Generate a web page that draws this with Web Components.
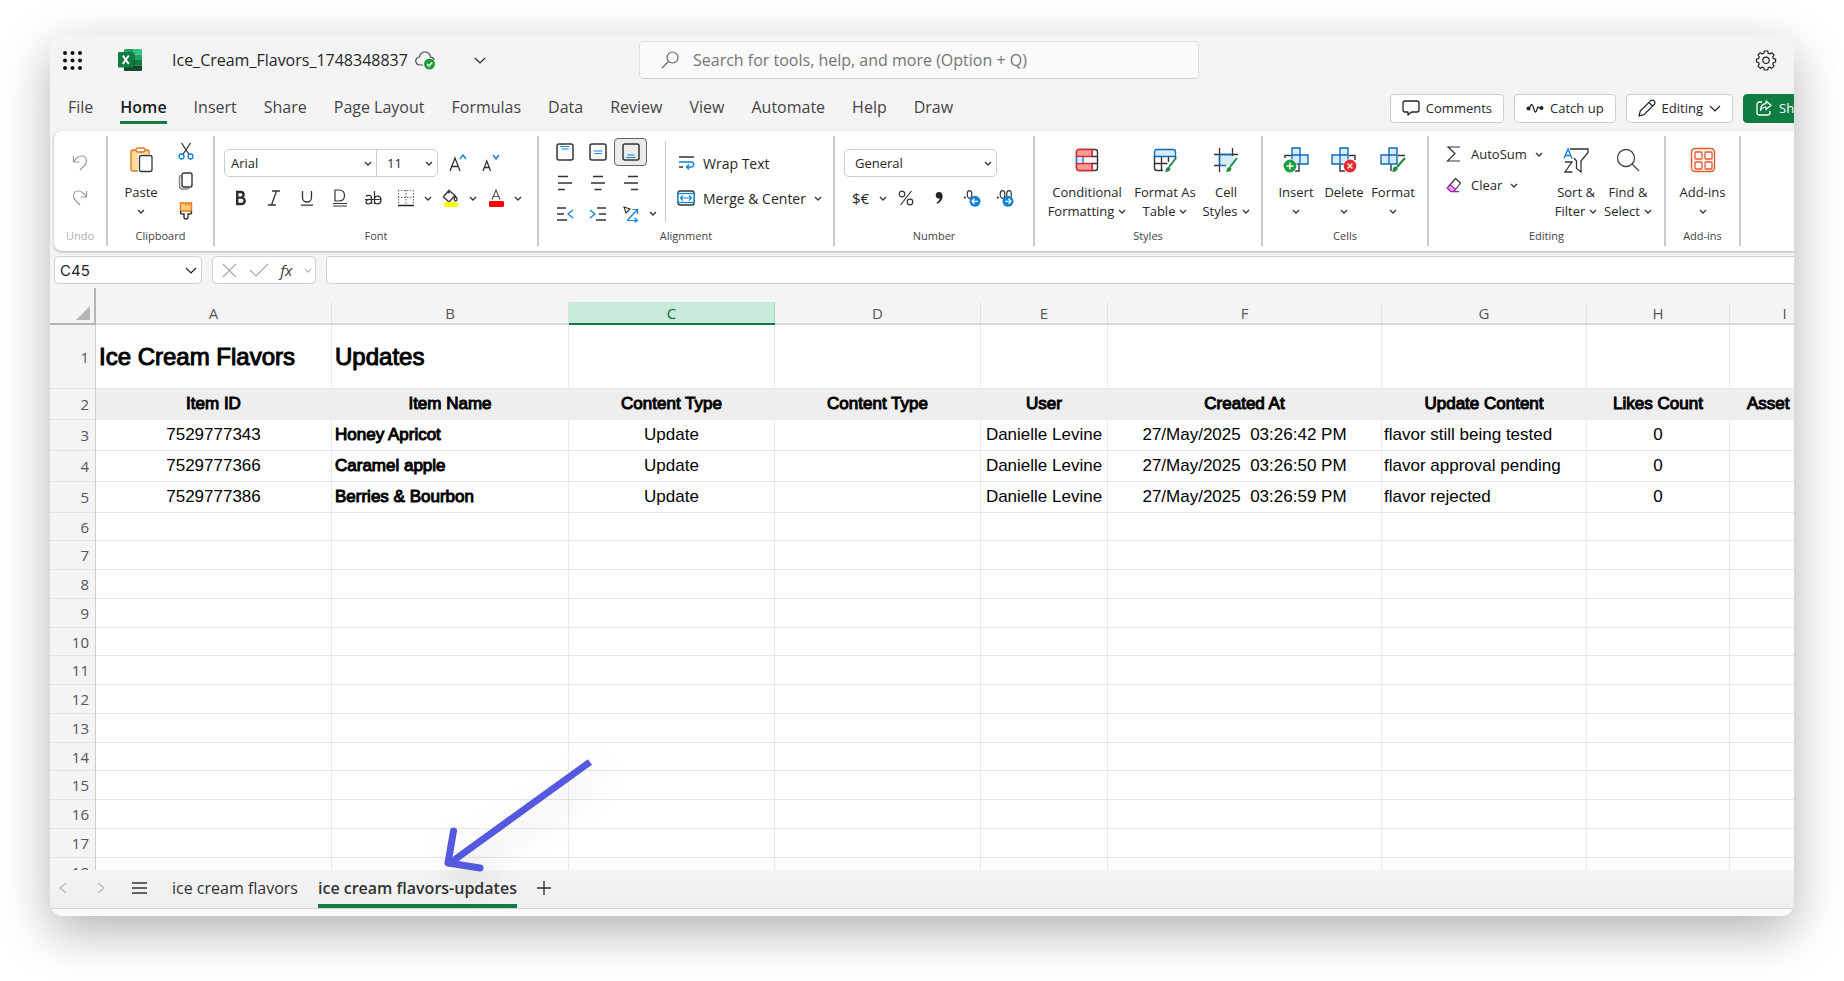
<!DOCTYPE html>
<html lang="en">
<head>
<meta charset="utf-8">
<title>Ice_Cream_Flavors_1748348837</title>
<style>
  body { margin: 0; background: #fff; font-family: "Open Sans", "Noto Sans", sans-serif; color: #262626; }
</style>
</head>
<body>
<workbook-window></workbook-window>

<script>
const define = (name, html, setup) => customElements.define(name, class extends HTMLElement {
  constructor() {
    super();
    const t = document.createElement('template');
    t.innerHTML = html;
    this.attachShadow({ mode: 'open' }).append(t.content.cloneNode(true));
  }
  connectedCallback() { if (setup) setup.call(this, this.shadowRoot); }
});

const D = '#333', B = '#0f83d6', G = '#1e8e3e', M = '#9a9a9a';
/* name: [width, height, markup] */
const ICONS = {
  chev: [8, 5, `<path d="M1 1l3 3 3-3" stroke="${D}" stroke-width="1.3"/>`],
  chevgrey: [8, 5, `<path d="M1 1l3 3 3-3" stroke="#bbb" stroke-width="1.3"/>`],
  chevbig: [12, 7, `<path d="M1 1l5 5 5-5" stroke="#222" stroke-width="1.2"/>`],
  waffle: [19, 19, [2, 9.5, 17].map(y => [2, 9.5, 17].map(x => `<circle cx="${x}" cy="${y}" r="2" fill="#111"/>`).join('')).join('')],
  excel: [24, 22, `<path d="M7.500 0H15v5.500H6V1.500Q6 0 7.500 0z" fill="#21a366"/><path d="M15 0h7.500Q24 0 24 1.500v4H15z" fill="#33c481"/><path d="M6 5.500h9V11H6z" fill="#107c41"/><path d="M15 5.500h9V11h-9z" fill="#21a366"/><path d="M6 11h9v5.500H6z" fill="#185c37"/><path d="M15 11h9v5.500h-9z" fill="#107c41"/><path d="M6 16.500h18v4Q24 22 22.500 22h-15Q6 22 6 20.500z" fill="#134a2c"/><rect x="6" y="4" width="11" height="15" fill="#0b3d22" opacity=".4"/><rect y="3" width="15.500" height="15.500" rx="1.300" fill="#107c41"/><path d="M4.800 6.500l6 8.500M10.800 6.500l-6 8.500" stroke="#fff" stroke-width="2"/>`],
  cloud: [21, 19, `<path d="M8 14H5a4 4 0 0 1-.5-8C5 3 7 1 10 1c3.200 0 5 2 5.500 5 2 .1 3.300 1.200 3.600 3" stroke="#444" stroke-width="1.200"/><circle cx="14.500" cy="13" r="5.500" fill="#1fa03c"/><path d="M12 13l2 2 3.200-3.500" stroke="#fff" stroke-width="1.400"/>`],
  search: [18, 18, `<circle cx="11.500" cy="6.500" r="5.500" stroke="#666" stroke-width="1.200"/><path d="M7.500 10.500L1 17" stroke="#666" stroke-width="1.200"/>`],
  gear: [20, 20, `<path d="M8.300 1h3.400l.5 2.300 1.500.7 2-1.300 2.300 2.300-1.300 2 .7 1.600 2.200.4v3l-2.200.5-.7 1.500 1.300 2.100-2.300 2.300-2-1.300-1.500.7-.5 2.200H8.300l-.5-2.200-1.500-.7-2 1.300L2 16.100l1.300-2.100-.7-1.500L.5 12V9l2.100-.4L3.300 7 2 5l2.300-2.300 2 1.300 1.500-.7z" stroke="#222" stroke-width="1.200" stroke-linejoin="round"/><circle cx="10" cy="10.300" r="3.200" stroke="#222" stroke-width="1.200"/>`],
  comment: [18, 16, `<path d="M3 1h12q2 0 2 2v7q0 2-2 2H9.500L6 15v-3H3q-2 0-2-2V3q0-2 2-2z" stroke="#222" stroke-width="1.300" stroke-linejoin="round"/>`],
  catchup: [18, 10, `<circle cx="2.500" cy="5.500" r="2" fill="#222"/><circle cx="15.500" cy="5" r="2" fill="#222"/><path d="M2.500 5.500C4 5.500 4.500 1 6 1.500S8 9 9.500 9 11 4 12 4s1 1.500 3.500 1" stroke="#222" stroke-width="1.300"/>`],
  pencil: [18, 18, `<path d="M1 17l1.300-5L12.500 1.800a2 2 0 0 1 3.700 3.700L6 15.700zM11 3.500l3.500 3.500" stroke="#222" stroke-width="1.200" stroke-linejoin="round"/>`],
  share: [16, 16, `<path d="M6 2H3.500Q1 2 1 4.500v8Q1 15 3.500 15h8q2.500 0 2.500-2.500V11" stroke="#fff" stroke-width="1.300"/><path d="M10 1l5 4.300-5 4.200V7C7 7 5.500 8 4.500 10.500 4.500 6 7 3.800 10 3.600z" stroke="#fff" stroke-width="1.200" stroke-linejoin="round"/>`],
  undo: [16, 18, `<path d="M1.500 2v6h6M1.500 8C4 4 7 2 10 2c3 0 4.500 2 4.500 5 0 2.500-1.500 4-3 5.500L8 16" stroke="${M}" stroke-width="1.200"/>`],
  redo: [16, 18, `<path d="M14.500 2v6h-6M14.500 8C12 4 9 2 6 2 3 2 1.500 4 1.500 7c0 2.500 1.500 4 3 5.500L8 16" stroke="${M}" stroke-width="1.200"/>`],
  paste: [24, 26, `<rect x="2" y="3" width="18" height="21" rx="2" fill="#fbdc9c" stroke="#e07b1f" stroke-width="1.400"/><rect x="7" y="1" width="9" height="4" rx="2" fill="#fff" stroke="#e3701a" stroke-width="1.300"/><rect x="9" y="7" width="14" height="18" fill="#fff"/><rect x="10.500" y="8.500" width="12.500" height="16" rx="2" fill="#fff" stroke="${D}" stroke-width="1.300"/>`],
  cut: [16, 18, `<path d="M3.500 1l7.300 11M12.500 1L5.200 12" stroke="${D}" stroke-width="1.300"/><circle cx="3.500" cy="14.500" r="2.500" stroke="${B}" stroke-width="1.300"/><circle cx="12.500" cy="14.500" r="2.500" stroke="${B}" stroke-width="1.300"/>`],
  copy: [16, 18, `<path d="M3 3.500Q1.500 4 1.500 5.500V14q0 3 3 3H9q1.500 0 2-1" stroke="#888" stroke-width="1.500"/><rect x="4" y="1" width="10" height="14" rx="2" stroke="${D}" stroke-width="1.400"/>`],
  brush: [16, 18, `<path d="M2.500 1h11v8h-11z" fill="#ffd07a" stroke="#e07b1f" stroke-width="1.400"/><path d="M8 1v3M11 1v3" stroke="#e07b1f" stroke-width="1.200"/><path d="M2.500 9v1.500q0 1.500 1.500 1.500h2v3q0 2 2 2t2-2v-3h2q1.500 0 1.500-1.500V9" stroke="${D}" stroke-width="1.400"/>`],
  grow: [18, 18, `<path d="M1 17L6 4l5 13M3 12.500h6" stroke="${D}" stroke-width="1.300"/><path d="M11 5l3-4 3 4" stroke="${B}" stroke-width="1.400"/>`],
  shrink: [18, 18, `<path d="M1 17L4.800 7l3.700 10M2.500 13.500h4.800" stroke="${D}" stroke-width="1.300"/><path d="M11 1l3 4 3-4" stroke="${B}" stroke-width="1.400"/>`],
  bold: [12, 16, `<path d="M2.200 2v12h4.300a3.200 3.200 0 0 0 0-6.400H2.200h3.600a2.800 2.800 0 0 0 0-5.600z" stroke="#2b2b2b" stroke-width="2.400"/>`],
  italic: [14, 16, `<path d="M5 1h8M1 15h8M9.500 1l-5 14" stroke="${D}" stroke-width="1.300"/>`],
  underline: [14, 16, `<path d="M2.500 1v6.500a4.500 4.500 0 0 0 9 0V1M1 15.200h12" stroke="${D}" stroke-width="1.300"/>`],
  dunder: [16, 18, `<path d="M3 1v11h4c3.500 0 5.500-2 5.500-5.500S10.500 1 7 1zM1 14.500h14M1 17h14" stroke="${D}" stroke-width="1.200"/>`],
  strike: [18, 16, `<path d="M1 9.500h16" stroke="${D}" stroke-width="1.200"/><path d="M2 6.500C3 5 7.500 4.500 7.500 8v6M7.500 9.500C3 9 2 10.500 2 12c0 2.500 4 2.500 5.500 0M10.500 1v13M10.500 8c1.500-3 6.500-2.500 6.500 2s-5 5-6.500 2" stroke="${D}" stroke-width="1.300"/>`],
  borders: [18, 18, `<path d="M1.500 1v14M9 1v14M16.500 1v14M1 1.500h16M1 8.500h16" stroke="#777" stroke-width="1.200" stroke-dasharray="1.500 1.500"/><path d="M1 16.500h16" stroke="#222" stroke-width="1.500"/>`],
  fill: [18, 18, `<path d="M2 7l5-5.500 6 5L8 12q-1 .8-2 0L2 8.500q-.8-.8 0-1.500zM7 .5v4" stroke="${D}" stroke-width="1.300"/><path d="M13.500 7.500q3 3 0 4.500-2.500-1.500 0-4.500z" stroke="${D}" stroke-width="1.300"/><rect x="2" y="13" width="14" height="5" rx="1.500" fill="#ff0"/>`],
  fontcolor: [16, 18, `<path d="M4 10.500L8 1l4 9.500M5.200 7.500h5.600" stroke="#555" stroke-width="1.200"/><rect x="1" y="12" width="15" height="6" rx="1.500" fill="#f00"/>`],
  valign1: [18, 18, `<rect x="1" y="1" width="16" height="16" rx="2" stroke="${D}" stroke-width="1.500"/><path d="M4.500 3.500h9M5.500 6h7" stroke="${B}" stroke-width="1.200"/>`],
  valign2: [18, 18, `<rect x="1" y="1" width="16" height="16" rx="2" stroke="${D}" stroke-width="1.500"/><path d="M4.500 8h9M5.500 10.500h7" stroke="${B}" stroke-width="1.200"/>`],
  valign3: [18, 18, `<rect x="1" y="1" width="16" height="16" rx="2" stroke="${D}" stroke-width="1.500"/><path d="M5.500 12h7M4.500 14.500h9" stroke="${B}" stroke-width="1.200"/>`],
  left: [16, 16, `<path d="M1 1.500h10M1 8h14M1 14.500h7" stroke="${D}" stroke-width="1.400"/>`],
  center: [16, 16, `<path d="M3 1.500h10M1 8h14M4.500 14.500h7" stroke="${D}" stroke-width="1.400"/>`],
  right: [16, 16, `<path d="M5 1.500h10M1 8h14M8 14.500h7" stroke="${D}" stroke-width="1.400"/>`],
  outdent: [18, 14, `<path d="M1 1h9M1 7h7M1 13h10" stroke="${D}" stroke-width="1.300"/><path d="M17 3l-5 4 5 4" stroke="${B}" stroke-width="1.300"/>`],
  indent: [18, 14, `<path d="M8 1h9M10 7h7M7 13h10" stroke="${D}" stroke-width="1.300"/><path d="M1 3l5 4-5 4" stroke="${B}" stroke-width="1.300"/>`],
  orient: [16, 16, `<path d="M1 1l6 2-4 4z" fill="#fff" stroke="${D}" stroke-width="1.200"/><path d="M4.500 14L14 4M9.500 3.500h5V8M4 14.500h10M11.500 12l3 2.500-3 2" stroke="${B}" stroke-width="1.200"/>`],
  wrap: [17, 14, `<path d="M1 1h15" stroke="${D}" stroke-width="1.400"/><path d="M1 6h12c3.500 0 3.500 5 0 5H9M11 8.500L8.500 11l2.500 2.500" stroke="${B}" stroke-width="1.300"/><path d="M1 11h4" stroke="${D}" stroke-width="1.400"/>`],
  merge: [18, 16, `<rect x="1" y="1" width="16" height="14" rx="2" stroke="${D}" stroke-width="1.400"/><rect x="1" y="3.500" width="16" height="9" fill="#fff" stroke="${B}" stroke-width="1.300"/><path d="M3.500 8h11M6 5.500L3.500 8 6 10.500M12 5.500L14.500 8 12 10.500" stroke="${B}" stroke-width="1.200"/>`],
  percent: [16, 16, `<circle cx="4" cy="4" r="2.800" stroke="${D}" stroke-width="1.200"/><circle cx="12" cy="12" r="2.800" stroke="${D}" stroke-width="1.200"/><path d="M13.500 1L2.500 15" stroke="${D}" stroke-width="1.200"/>`],
  comma: [10, 14, `<path d="M5 1a3.300 3.300 0 1 0 .8 6.500C5.500 9.500 4 11 2.500 11.500l.5 1.300C6.500 11.500 8.600 8.500 8.600 5 8.600 2.500 7 1 5 1z" fill="#222"/>`],
  dec1: [18, 17, `<circle cx="1.800" cy="7.500" r="1" fill="#222"/><ellipse cx="6.500" cy="4.500" rx="2.300" ry="3.800" stroke="${D}" stroke-width="1.200"/><circle cx="12" cy="11.300" r="5.500" fill="${B}"/><path d="M15 11.300H9.200M11.500 8.800L9 11.300l2.500 2.500" stroke="#fff" stroke-width="1.300"/>`],
  dec2: [18, 17, `<circle cx="1.800" cy="7.500" r="1" fill="#222"/><ellipse cx="6.500" cy="4.500" rx="2.300" ry="3.800" stroke="${D}" stroke-width="1.200"/><ellipse cx="13" cy="4.500" rx="2.300" ry="3.800" stroke="${D}" stroke-width="1.200"/><circle cx="12" cy="11.300" r="5.500" fill="${B}"/><path d="M9 11.300h5.800M12.500 8.800L15 11.300l-2.500 2.500" stroke="#fff" stroke-width="1.300"/>`],
  condfmt: [24, 24, `<rect x="1.500" y="1.500" width="21" height="21" rx="2.500" stroke="${D}" stroke-width="1.400"/><path d="M17 8.500h5.500M17 15.500h5.500M17 1.500v7M17 15.500v7" stroke="${D}" stroke-width="1.300"/><path d="M4 1.500h13v7H1.500V4Q1.500 1.500 4 1.500zM1.500 15.500H17v7H4q-2.500 0-2.500-2.500z" fill="#ff9a9a" stroke="#d8262c" stroke-width="1.400"/><path d="M1.500 9v6" stroke="${B}" stroke-width="1.500"/><path d="M2.500 9.200h5v5.600h-5z" fill="#d6ecfb"/><path d="M8 9v6" stroke="${B}" stroke-width="1.400"/>`],
  fmttable: [24, 24, `<path d="M1.500 8v12q0 2.500 2.500 2.500h6M1.500 15.500h13M8.500 8v14.500M15.500 8v6M22.500 8v3" stroke="${D}" stroke-width="1.400"/><path d="M4 1.500h16q2.500 0 2.500 2.500v4.500h-21V4Q1.500 1.500 4 1.500z" fill="#d6ecfb" stroke="#1068bf" stroke-width="1.400"/><path d="M23 10l-7 9" stroke="${G}" stroke-width="2"/><path d="M12 24c1-1 .5-5 3.500-5s3 5-3.500 5z" fill="${G}"/>`],
  cellstyle: [24, 24, `<path d="M5.500 6.500h14v11h-14z" fill="#d6ecfb"/><path d="M0 6.500h24M5.500 0v24M18.500 0v8M0 17.500h6" stroke="${D}" stroke-width="1.300"/><path d="M5.500 6.500h13M5.500 6.500v11H12" stroke="#1068bf" stroke-width="1.500"/><path d="M23 10l-7 9" stroke="${G}" stroke-width="2"/><path d="M12 24c1-1 .5-5 3.500-5s3 5-3.500 5z" fill="${G}"/>`],
  inscell: [26, 26, `<path d="M2 11V8.500h7M16 17v7h-4" stroke="${D}" stroke-width="1.400"/><path d="M9 1h8v7h8v9H9z" fill="#d6ecfb" stroke="#1068bf" stroke-width="1.400"/><path d="M9 8h8v9M17 8v9" stroke="#1068bf" stroke-width="1.300"/><circle cx="7" cy="19" r="7" fill="#fff"/><circle cx="7" cy="19" r="6.400" fill="#1e9e42"/><path d="M7 15.500v7M3.500 19h7" stroke="#fff" stroke-width="1.400"/>`],
  delcell: [26, 26, `<path d="M24 13V8.500h-6M9 17v7h5" stroke="${D}" stroke-width="1.400"/><path d="M9 8V1h8v16H1V8z" fill="#d6ecfb" stroke="#1068bf" stroke-width="1.400"/><path d="M9 17V8h8" stroke="#1068bf" stroke-width="1.300"/><circle cx="19" cy="19" r="7" fill="#fff"/><circle cx="19" cy="19" r="6.400" fill="#e8292f"/><path d="M16.600 16.600l4.800 4.800M21.400 16.600l-4.800 4.800" stroke="#fff" stroke-width="1.400"/>`],
  fmtcell: [26, 26, `<path d="M25 8.500h-7M11 17v7" stroke="${D}" stroke-width="1.400"/><path d="M9 8V1h8v16H1V8z" fill="#d6ecfb" stroke="#1068bf" stroke-width="1.400"/><path d="M9 17V8h8" stroke="#1068bf" stroke-width="1.300"/><path d="M25 11l-8 9" stroke="${G}" stroke-width="2.200"/><path d="M12 25c1-1 .5-5.500 3.500-5.500s3.500 5.500-3.500 5.500z" fill="${G}"/>`],
  sigma: [16, 16, `<path d="M14 1H2l7 6.500L1.500 15H14" stroke="${D}" stroke-width="1.200"/>`],
  eraser: [16, 16, `<path d="M9.500 1.500l5 4.500-6.500 8.500H5L1.500 11z" stroke="${D}" stroke-width="1.200" stroke-linejoin="round"/><path d="M4.200 7.700L1.200 11l3.600 3.500h2.700l2-2.500z" fill="#e2a6ea" stroke="#9b1fb0" stroke-width="1.200"/><path d="M5 14.700h8" stroke="#9b1fb0" stroke-width="1.200"/>`],
  sort: [26, 26, `<path d="M7 2h18v3.500L18 14v11l-4.500-3.500V14L11 11" stroke="${D}" stroke-width="1.300"/><path d="M1 11.500L5 2l4 9.500M2.300 8.500h5.400" stroke="${B}" stroke-width="1.400"/><path d="M2 15h7L2 25h7.500" stroke="${D}" stroke-width="1.300"/>`],
  find: [24, 24, `<circle cx="10" cy="10" r="8.500" stroke="#444" stroke-width="1.300"/><path d="M16 16l7 7" stroke="#444" stroke-width="1.300"/>`],
  addins: [26, 26, `<rect x="1.500" y="1.500" width="23" height="23" rx="3.500" fill="#fff4ef" stroke="#e05a33" stroke-width="1.400"/>` + [5, 15].map(x => [5, 15].map(y => `<rect x="${x}" y="${y}" width="7" height="7" rx="1" fill="#fff" stroke="#e05a33" stroke-width="1.300"/>`).join('')).join('')],
  cross: [15, 15, `<path d="M1 1l13 13M14 1L1 14" stroke="#aaa" stroke-width="1.200"/>`],
  check: [20, 14, `<path d="M1 7l6 6L19 1" stroke="#aaa" stroke-width="1.200"/>`],
  prev: [8, 12, `<path d="M7 1L1 6l6 5" stroke="#b5b5b5" stroke-width="1.200"/>`],
  next: [8, 12, `<path d="M1 1l6 5-6 5" stroke="#b5b5b5" stroke-width="1.200"/>`],
  menu: [15, 12, `<path d="M0 1h15M0 6h15M0 11h15" stroke="#333" stroke-width="1.500"/>`],
  plus: [14, 14, `<path d="M7 0v14M0 7h14" stroke="#333" stroke-width="1.400"/>`]
};

define('ui-icon', `<style>:host{display:inline-flex;flex:none}svg{display:block;overflow:visible}</style>`, function (r) {
  const [w, h, body] = ICONS[this.getAttribute('name')];
  r.innerHTML += `<svg width="${w}" height="${h}" viewBox="0 0 ${w} ${h}" fill="none" aria-hidden="true">${body}</svg>`;
});

const RESET = `*{box-sizing:border-box}button,select,input{font:inherit;color:inherit;margin:0;padding:0;border:0;background:none;border-radius:0;outline:0;appearance:none}button{display:flex;align-items:center;justify-content:center}`;

/* Icon-only ribbon button */
define('icon-button', `<style>${RESET}
  :host{display:block;width:var(--w,33px);height:var(--h,28px)}
  button{width:100%;height:100%}
  :host([pressed]) button{background:#ebebeb;border:1px solid #666;border-radius:4px}
</style><button type="button"><slot></slot></button>`, function (r) {
  r.querySelector('button').setAttribute('aria-label', this.getAttribute('label') || '');
  const n = this.getAttribute('icon');
  if (n) r.querySelector('button').innerHTML = `<ui-icon name="${n}"></ui-icon>`;
});

/* Tall ribbon button: icon above one or two lines of text */
define('tall-button', `<style>${RESET}
  :host{display:block;width:var(--w,50px);font-size:13px;line-height:19px}
  button{flex-direction:column;width:100%;padding-top:11px}
  .icon{display:flex;align-items:center;justify-content:center;height:26px;margin-bottom:10px}
  .line{display:flex;align-items:center;justify-content:center;gap:4px;height:19px;white-space:nowrap}
</style><button type="button"><span class="icon"></span><span class="line"><slot></slot></span><span class="line"><slot name="more"></slot><ui-icon name="chev"></ui-icon></span></button>`, function (r) {
  r.querySelector('.icon').innerHTML = `<ui-icon name="${this.getAttribute('icon')}"></ui-icon>`;
});

/* Wide ribbon button: icon beside text */
define('wide-button', `<style>${RESET}
  :host{display:block;height:28px;font-size:var(--fs,14px)}
  button{height:100%;gap:8px;white-space:nowrap}
  .icon{display:flex;justify-content:center;width:18px}
</style><button type="button"><span class="icon"></span><slot></slot></button>`, function (r) {
  r.querySelector('.icon').innerHTML = `<ui-icon name="${this.getAttribute('icon')}"></ui-icon>`;
  if (this.hasAttribute('menu')) r.querySelector('button').insertAdjacentHTML('beforeend', '<ui-icon name="chev"></ui-icon>');
});

/* Drop-down with its own arrow */
define('drop-down', `<style>${RESET}
  :host{display:grid;align-items:center;width:var(--w);height:28px;font-size:13px}
  select,ui-icon{grid-area:1/1}
  select{width:100%;height:100%;padding-left:var(--pad,6px)}
  ui-icon{justify-self:end;margin-right:4px;pointer-events:none}
</style><select></select><ui-icon name="chev"></ui-icon>`, function (r) {
  const s = r.querySelector('select');
  s.setAttribute('aria-label', this.getAttribute('label'));
  s.innerHTML = `<option>${this.getAttribute('value')}</option>`;
});

/* Titled ribbon group */
define('ribbon-group', `<style>
  :host{display:flex;flex-direction:column;box-sizing:border-box;width:var(--group);height:110px;border-right:2px solid #cbcbcb;flex:none}
  .body{flex:1;display:flex;min-height:0}
  .title{height:20px;font-size:11px;line-height:20px;text-align:center;color:#444}
  :host([dim]) .title{color:#b0b0b0}
</style><div class="body"><slot></slot></div><div class="title"></div>`, function (r) {
  r.querySelector('.title').textContent = this.getAttribute('title-text');
});

define('title-bar', `<style>${RESET}
  :host{display:grid;grid-template-columns:1fr 560px 1fr;align-items:center;height:50px;padding-right:6px;font-size:16px}
  .left{display:flex;align-items:center;padding-left:13px}
  .left ui-icon[name=excel]{margin:0 30px 0 36px}
  .left button{margin-left:7px}
  .left button.more{margin-left:38px}
  .search{display:flex;align-items:center;gap:14px;height:38px;padding-left:21px;background:#fafafa;border:1px solid #e0e0e0;border-bottom-color:#cfcfcf;border-radius:5px}
  input{flex:1;height:100%}
  input::placeholder{color:#757575;opacity:1}
  .right{display:flex;justify-content:flex-end;padding-right:12px}
</style>
<div class="left"><button type="button" aria-label="Apps" style="margin:0"><ui-icon name="waffle"></ui-icon></button><ui-icon name="excel"></ui-icon><span>Ice_Cream_Flavors_1748348837</span><button type="button" aria-label="Saved"><ui-icon name="cloud"></ui-icon></button><button type="button" class="more" aria-label="File details"><ui-icon name="chevbig"></ui-icon></button></div>
<label class="search"><ui-icon name="search"></ui-icon><input type="text" aria-label="Search" placeholder="Search for tools, help, and more (Option + Q)"></label>
<div class="right"><button type="button" aria-label="Settings"><ui-icon name="gear"></ui-icon></button></div>`);

define('tab-bar', `<style>${RESET}
  :host{display:flex;align-items:center;height:46px;overflow:hidden}
  nav{display:flex;gap:27px;padding-left:18px;font-size:16px}
  a{color:#444;text-decoration:none;padding-top:2px;line-height:27px;white-space:nowrap;border-bottom:3px solid transparent}
  a[aria-current]{color:#1b1b1b;font-weight:600;border-color:#107c41}
  .actions{display:flex;gap:10px;margin-left:auto;margin-right:-39px;font-size:13px}
  .actions button{height:29px;padding:0 11px;gap:6px;background:#fff;border:1px solid #cdcdcd;border-radius:4px;white-space:nowrap}
  .actions button.share{width:90px;justify-content:flex-start;padding-left:12px;gap:7px;background:#107c41;border-color:#107c41;color:#fff}
</style>
<nav></nav>
<div class="actions"><button type="button"><ui-icon name="comment"></ui-icon>Comments</button><button type="button"><ui-icon name="catchup"></ui-icon>Catch up</button><button type="button"><ui-icon name="pencil"></ui-icon>Editing<ui-icon name="chevbig"></ui-icon></button><button type="button" class="share"><ui-icon name="share"></ui-icon>Share</button></div>`, function (r) {
  r.querySelector('nav').innerHTML = ['File', 'Home', 'Insert', 'Share', 'Page Layout', 'Formulas', 'Data', 'Review', 'View', 'Automate', 'Help', 'Draw']
    .map(t => `<a href="#"${t === 'Home' ? ' aria-current="page"' : ''}>${t}</a>`).join('');
});

define('tool-ribbon', `<style>
  :host{display:flex;box-sizing:border-box;height:120px;margin-left:4px;padding-top:5px;background:#fff;border-radius:8px 0 0 8px;box-shadow:0 1px 3px rgba(0,0,0,.3);overflow:hidden;flex:none}
  .stack{display:flex;flex-direction:column}
  .row{display:flex;align-items:center}
  .top{align-items:flex-start;padding-left:9px}
  .box{display:flex;align-self:flex-start;border:1px solid #cdcdcd;border-radius:5px}
  .box drop-down{height:26px}
  .box drop-down+drop-down{border-left:1px solid #cdcdcd}
  .two{padding:13px 0 0 9px;gap:7px}
  .small{--w:12px}
  .align{display:grid;grid-template-columns:33px 33px 33px 12px;grid-auto-rows:31px;align-items:center;margin-left:9px;height:93px}
  .rule{width:1px;height:81px;margin:5px 11px 0 6px;background:#cbcbcb}
</style>
<ribbon-group title-text="Undo" dim style="--group:54px"><div class="stack two"><icon-button icon="undo" label="Undo"></icon-button><icon-button icon="redo" label="Redo"></icon-button></div></ribbon-group>
<ribbon-group title-text="Clipboard" style="--group:107px"><tall-button icon="paste" style="--w:66px">Paste</tall-button><div class="stack" style="--w:24px;--h:31px"><icon-button icon="cut" label="Cut"></icon-button><icon-button icon="copy" label="Copy"></icon-button><icon-button icon="brush" label="Format painter"></icon-button></div></ribbon-group>
<ribbon-group title-text="Font" style="--group:324px"><div class="stack two"><div class="row"><div class="box"><drop-down label="Font" value="Arial" style="--w:151px"></drop-down><drop-down label="Font size" value="11" style="--w:60px;--pad:10px"></drop-down></div><icon-button icon="grow" label="Grow font" style="margin-left:3px"></icon-button><icon-button icon="shrink" label="Shrink font"></icon-button></div>
<div class="row"><icon-button icon="bold" label="Bold"></icon-button><icon-button icon="italic" label="Italic"></icon-button><icon-button icon="underline" label="Underline"></icon-button><icon-button icon="dunder" label="Double underline"></icon-button><icon-button icon="strike" label="Strikethrough"></icon-button><icon-button icon="borders" label="Borders"></icon-button><icon-button icon="chev" class="small" label="Borders menu"></icon-button><icon-button icon="fill" label="Fill color"></icon-button><icon-button icon="chev" class="small" label="Fill menu"></icon-button><icon-button icon="fontcolor" label="Font color"></icon-button><icon-button icon="chev" class="small" label="Font color menu"></icon-button></div></div></ribbon-group>
<ribbon-group title-text="Alignment" style="--group:296px"><div class="align"><icon-button icon="valign1" label="Top"></icon-button><icon-button icon="valign2" label="Middle"></icon-button><icon-button icon="valign3" label="Bottom" pressed></icon-button><span></span><icon-button icon="left" label="Left"></icon-button><icon-button icon="center" label="Center"></icon-button><icon-button icon="right" label="Right"></icon-button><span></span><icon-button icon="outdent" label="Outdent"></icon-button><icon-button icon="indent" label="Indent"></icon-button><icon-button icon="orient" label="Orientation"></icon-button><icon-button icon="chev" class="small" label="Orientation menu"></icon-button></div><div class="rule"></div><div class="stack" style="padding-top:13px;gap:7px"><wide-button icon="wrap">Wrap Text</wide-button><wide-button icon="merge" menu>Merge &amp; Center</wide-button></div></ribbon-group>
<ribbon-group title-text="Number" style="--group:200px"><div class="stack two"><div class="box"><drop-down label="Number format" value="General" style="--w:151px;--pad:10px"></drop-down></div><div class="row"><icon-button label="Currency" style="font-size:15px">$€</icon-button><icon-button icon="chev" class="small" label="Currency menu"></icon-button><icon-button icon="percent" label="Percent"></icon-button><icon-button icon="comma" label="Comma"></icon-button><icon-button icon="dec1" label="Decrease decimals"></icon-button><icon-button icon="dec2" label="Increase decimals"></icon-button></div></div></ribbon-group>
<ribbon-group title-text="Styles" style="--group:228px"><div class="row top"><tall-button icon="condfmt" style="--w:86px">Conditional<span slot="more">Formatting</span></tall-button><tall-button icon="fmttable" style="--w:70px">Format As<span slot="more">Table</span></tall-button><tall-button icon="cellstyle" style="--w:52px">Cell<span slot="more">Styles</span></tall-button></div></ribbon-group>
<ribbon-group title-text="Cells" style="--group:166px"><div class="row top"><tall-button icon="inscell" style="--w:48px">Insert</tall-button><tall-button icon="delcell" style="--w:48px">Delete</tall-button><tall-button icon="fmtcell" style="--w:50px">Format</tall-button></div></ribbon-group>
<ribbon-group title-text="Editing" style="--group:237px"><div class="stack" style="width:106px;padding:4px 0 0 16px;gap:3px;--fs:13px"><wide-button icon="sigma" menu>AutoSum</wide-button><wide-button icon="eraser" menu>Clear</wide-button></div><tall-button icon="sort" style="--w:50px">Sort &amp;<span slot="more">Filter</span></tall-button><tall-button icon="find" style="--w:54px">Find &amp;<span slot="more">Select</span></tall-button></ribbon-group>
<ribbon-group title-text="Add-ins" style="--group:75px"><tall-button icon="addins" style="--w:73px">Add-ins</tall-button></ribbon-group>`);

define('formula-bar', `<style>${RESET}
  :host{display:flex;gap:10px;height:28px;margin:5px 0 4px 4px;font-size:15px;flex:none}
  .box{display:flex;align-items:center;background:#fff;border:1px solid #d0d0d0;border-radius:5px}
  .name{width:148px;padding:0 4px 0 5px;font-family:Inter,sans-serif}
  .name input{flex:1;min-width:0}
  .fx{width:104px;justify-content:space-between;padding:0 3px 0 9px;gap:4px}
  .fx button.fn{font:italic 15px "Noto Sans",sans-serif;color:#444}
  .formula{flex:1;border-right:0;border-radius:5px 0 0 5px}
  .formula input{width:100%}
</style>
<div class="box name"><input type="text" aria-label="Name box" value="C45"><button type="button" aria-label="Names"><ui-icon name="chevbig"></ui-icon></button></div>
<div class="box fx"><button type="button" aria-label="Cancel"><ui-icon name="cross"></ui-icon></button><button type="button" aria-label="Enter"><ui-icon name="check"></ui-icon></button><button type="button" class="fn">fx</button><ui-icon name="chevgrey"></ui-icon></div>
<div class="box formula"><input type="text" aria-label="Formula"></div>`);

define('sheet-grid', `<style>
  *{box-sizing:border-box}
  :host{display:block;flex:1;min-height:0;overflow:hidden;background:#fff}
  table{table-layout:fixed;width:1790px;border-collapse:separate;border-spacing:0;font:17px/20px "Liberation Sans",Arial,sans-serif;color:#000}
  th,td{padding:0;height:31px;white-space:nowrap;overflow:hidden}
  thead th{height:37px;padding-top:14px;background:#f4f4f4;border-bottom:2px solid #dadada;font:15px/21px "Open Sans",sans-serif;color:#555}
  thead th span{display:block;height:21px;line-height:22px;border-right:1px solid #e2e2e2}
  thead th.on{border-color:#107c41;color:#0e6b38}
  thead th.on span{background:#c8ead8;border-color:#a5dabe}
  thead th.corner{padding:0;border-bottom-color:#b5b5b5;border-right:2px solid #b5b5b5}
  thead th.corner svg{display:block;margin:16px 0 0 auto}
  tbody th{padding-right:6px;background:#f4f4f4;border-right:1px solid #cfcfcf;border-bottom:1px solid #e3e3e3;font:15px/20px "Open Sans",sans-serif;color:#555;text-align:right}
  td{border-right:1px solid #e8e8e8;border-bottom:1px solid #e8e8e8;text-align:center}
  td.l{text-align:left;padding-left:2px}
  td.b,tr.head td,tr.big td{padding-left:3px;-webkit-text-stroke:1px #000}
  tr.big th,tr.big td{height:64px;font-size:24px;text-align:left}
  tr.big th{font-size:15px;text-align:right}
  tr.head td{padding:0;background:#eee;border-color:#eee}
  tr.head td:last-child{text-align:left;padding-left:17px}
  tr.empty th,tr.empty td{height:29px}
  tr.short th,tr.short td{height:28px}
</style><table></table>`, function (r) {
  const W = [46, 236, 237, 206, 206, 127, 274, 205, 143, 110];
  const data = [
    ['Ice Cream Flavors', 'Updates'],
    ['Item ID', 'Item Name', 'Content Type', 'Content Type', 'User', 'Created At', 'Update Content', 'Likes Count', 'Asset'],
    ['7529777343', 'Honey Apricot', 'Update', '', 'Danielle Levine', '27/May/2025\u00a0 03:26:42 PM', 'flavor still being tested', '0'],
    ['7529777366', 'Caramel apple', 'Update', '', 'Danielle Levine', '27/May/2025\u00a0 03:26:50 PM', 'flavor approval pending', '0'],
    ['7529777386', 'Berries &amp; Bourbon', 'Update', '', 'Danielle Levine', '27/May/2025\u00a0 03:26:59 PM', 'flavor rejected', '0']
  ];
  let h = `<colgroup>${W.map(w => `<col style="width:${w}px">`).join('')}</colgroup><thead><tr><th class="corner"><svg width="18" height="17"><path d="M14 1v14H0z" fill="#b5b5b5"/></svg></th>`;
  h += [...'ABCDEFGHI'].map(c => `<th scope="col"${c === 'C' ? ' class="on"' : ''}><span>${c}</span></th>`).join('') + '</tr></thead><tbody>';
  for (let i = 0; i < 18; i++) {
    const row = data[i] || [];
    const cls = i === 0 ? 'big' : i === 1 ? 'head' : i < 5 ? '' : (i - 5) % 4 === 0 ? 'empty short' : 'empty';
    h += `<tr class="${cls}"><th scope="row">${i + 1}</th>`;
    for (let c = 0; c < 9; c++) h += `<td class="${i > 1 && c === 1 ? 'l b' : i > 1 && c === 6 ? 'l' : ''}">${row[c] || ''}</td>`;
    h += '</tr>';
  }
  r.querySelector('table').innerHTML = h + '</tbody>';
});

define('sheet-tabs', `<style>${RESET}
  :host{display:flex;align-items:stretch;height:39px;padding-left:9px;border-bottom:1px solid #d6d6d6;box-sizing:border-box;background:linear-gradient(#f4f4f4,#efefef);font-size:16px;flex:none}
  button{padding-bottom:2px}
  button.arrow{width:8px;margin-right:30px}
  button.menu{width:15px;margin:0 25px 0 -3px}
  a{color:#333;text-decoration:none;padding-top:2px;line-height:32px;margin-right:20px;white-space:nowrap;border-bottom:4px solid transparent}
  a[aria-current]{font-weight:600;border-color:#187a44}
</style>
<button type="button" class="arrow" aria-label="Previous sheet"><ui-icon name="prev"></ui-icon></button><button type="button" class="arrow" aria-label="Next sheet"><ui-icon name="next"></ui-icon></button><button type="button" class="menu" aria-label="All sheets"><ui-icon name="menu"></ui-icon></button><a href="#">ice cream flavors</a><a href="#" aria-current="page">ice cream flavors-updates</a><button type="button" aria-label="Add sheet"><ui-icon name="plus"></ui-icon></button>`);

/* Annotation arrow that lies over the sheet and points at the open tab */
define('pointer-arrow', `<style>
  :host{position:absolute;left:386px;bottom:38px;pointer-events:none}
  svg{display:block;overflow:visible;filter:drop-shadow(8px 12px 16px rgba(0,0,0,.16))}
</style><svg width="160" height="120" viewBox="0 0 160 120" fill="none" stroke="#5559df" stroke-width="7"><path d="M14 105L154 4"/><path d="M17.500 73L12 105L44 110" stroke-linecap="round" stroke-linejoin="round"/></svg>`);

define('workbook-window', `<style>
  :host{display:block;box-sizing:border-box;height:100vh;padding:35px 50px 65px;overflow:hidden}
  main{position:relative;display:flex;flex-direction:column;height:100%;background:#f4f4f4;border-radius:13px;box-shadow:0 16px 50px rgba(0,0,0,.3);overflow:hidden}
  footer{height:7px;background:#fafafa;flex:none}
</style>
<main><title-bar></title-bar><tab-bar></tab-bar><tool-ribbon></tool-ribbon><formula-bar></formula-bar><sheet-grid></sheet-grid><sheet-tabs></sheet-tabs><footer></footer><pointer-arrow></pointer-arrow></main>`);
</script>
</body>
</html>
